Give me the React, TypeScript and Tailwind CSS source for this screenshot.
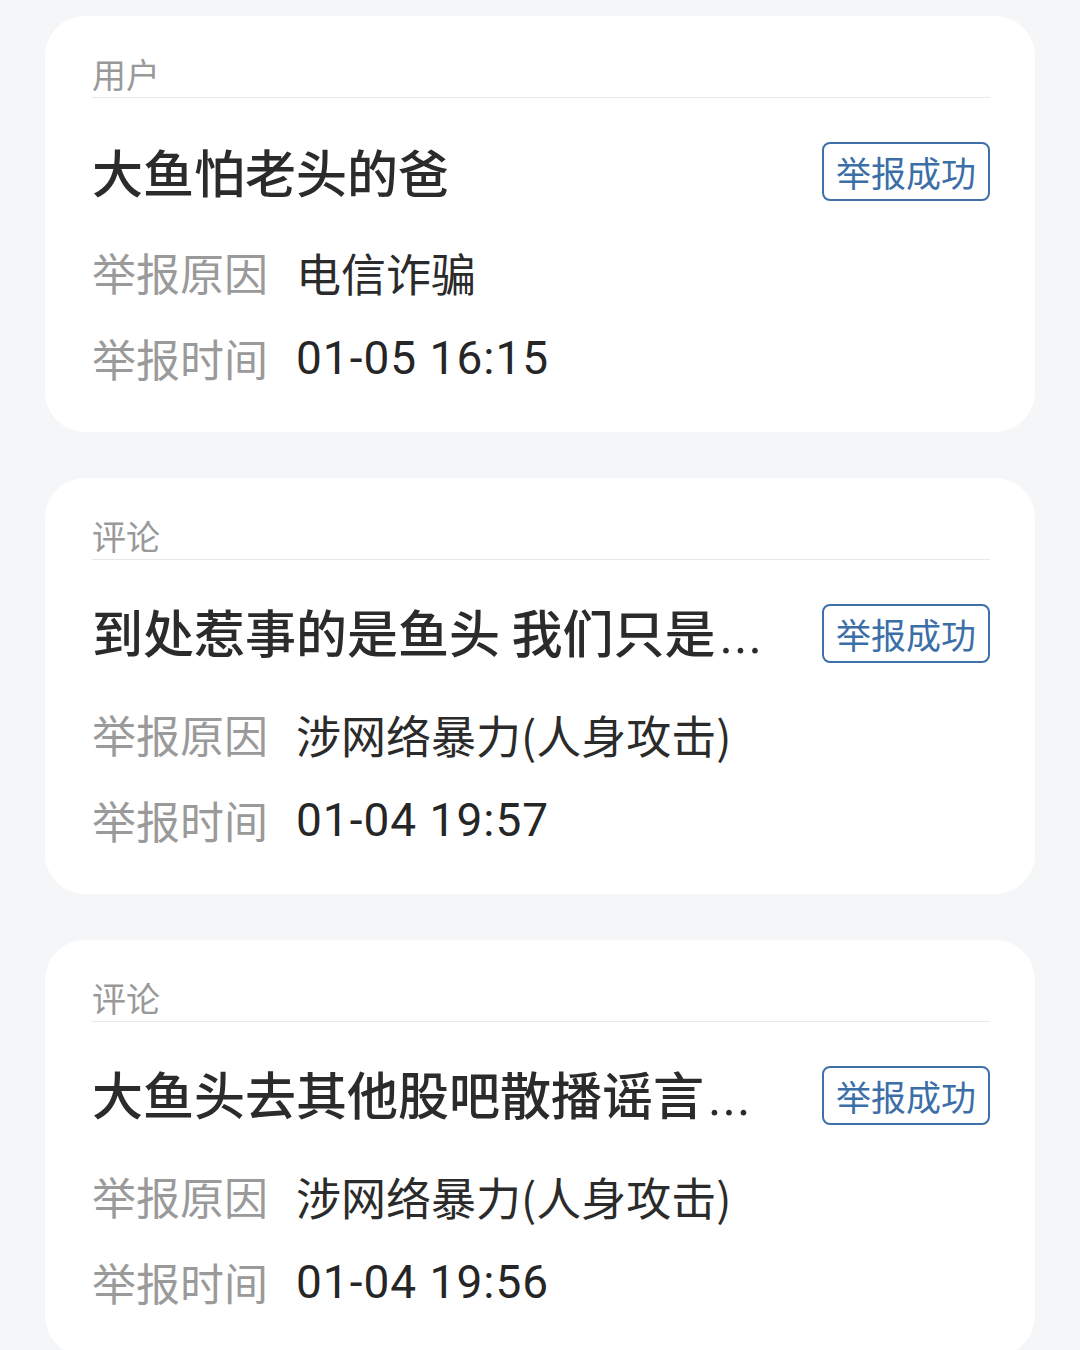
const font = {
  fontFamily: '"Noto Sans CJK SC", "Noto Sans", sans-serif',
};

type Report = {
  kind: string;
  title: string;
  clipped?: boolean;
  reason: string;
  time: string;
};

const reports: Report[] = [
  {
    kind: "用户",
    title: "大鱼怕老头的爸",
    reason: "电信诈骗",
    time: "01-05 16:15",
  },
  {
    kind: "评论",
    title: "到处惹事的是鱼头 我们只是",
    clipped: true,
    reason: "涉网络暴力(人身攻击)",
    time: "01-04 19:57",
  },
  {
    kind: "评论",
    title: "大鱼头去其他股吧散播谣言",
    clipped: true,
    reason: "涉网络暴力(人身攻击)",
    time: "01-04 19:56",
  },
];

function ReportCard({ report }: { report: Report }) {
  return (
    <div className="h-[416px] shrink-0 rounded-[40px] bg-white pl-[47px] pr-[45px] pt-[36px]">
      <div className="text-[34px] leading-[44px] text-[#999999]">{report.kind}</div>
      <div className="mt-[1px] h-px bg-[#e8e8e8]" />

      <div className="mt-[35px] flex h-[76px] items-center">
        <div className="mr-[45px] min-w-0 flex-1 overflow-hidden whitespace-nowrap text-[51px] font-medium leading-[76px] text-[#2b2b2b]">
          {report.title}
          {report.clipped && (
            <span className="ml-[4px] font-['Roboto'] font-normal tracking-[1px]">...</span>
          )}
        </div>
        <div className="flex h-[59px] w-[168px] shrink-0 items-center justify-center rounded-[8px] border-2 border-[#3f70a8] text-[35px] leading-none text-[#3c6ea7]">
          举报成功
        </div>
      </div>

      <div className="mt-[20px] flex h-[86px] items-center gap-[28px] text-[44px] leading-none">
        <span className="text-[#9a9a9a]">举报原因</span>
        <span className="text-[45px] text-[#2b2b2b]">{report.reason}</span>
      </div>
      <div className="flex h-[86px] items-center gap-[28px] text-[44px] leading-none">
        <span className="text-[#9a9a9a]">举报时间</span>
        <span className="font-['Roboto'] text-[46px] tracking-[1px] text-[#262626]">
          {report.time}
        </span>
      </div>
    </div>
  );
}

export default function App() {
  return (
    <main
      className="flex h-[1350px] flex-col gap-[46px] overflow-hidden bg-[#f5f6f8] px-[45px] pt-[16px]"
      style={font}
    >
      {reports.map((r, i) => (
        <ReportCard key={i} report={r} />
      ))}
    </main>
  );
}
